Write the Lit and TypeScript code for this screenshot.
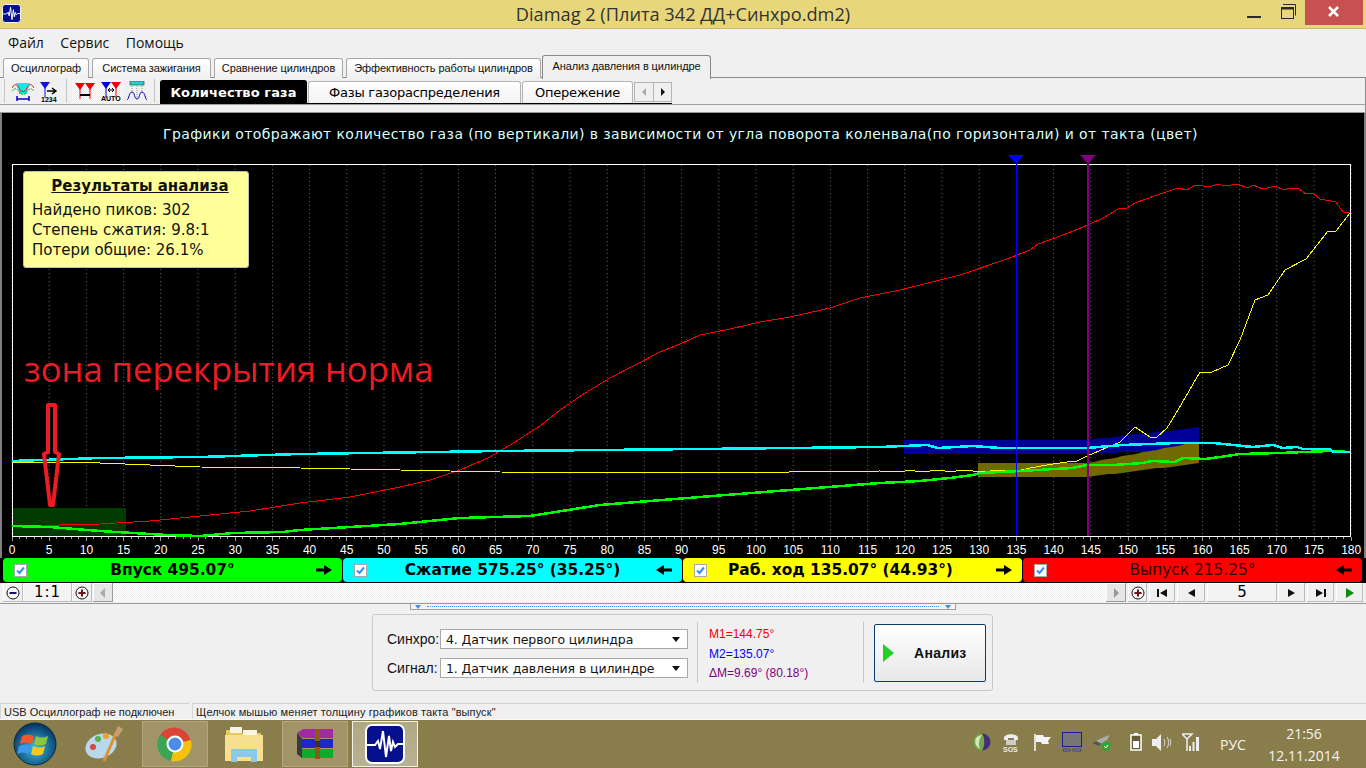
import { LitElement, css, html, svg } from "lit";
import { customElement } from "lit/decorators.js";

// curves are in page pixels, read off the reference
const RED = "12,525 60,525 100,524 150,521 200,516 250,511 300,503 350,497 400,487 430,480 460,470 490,457 515,442 540,426 560,410 585,393 610,378 635,365 660,352 680,344 700,335 730,329 760,322 790,317 830,308 860,298 900,290 960,275 1007,259 1017,255 1030,250 1038,244 1063,235 1088,225 1105,217 1118,209 1127,208 1135,203 1157,195 1178,188 1187,190 1195,185 1210,187 1217,184 1225,186 1238,184 1247,188 1253,185 1263,189 1275,186 1284,190 1290,188 1298,188 1306,194 1313,193 1320,199 1336,202 1343,212 1350,212";
const YELLOW = "12,462 100,463 200,467 300,468 400,470 500,472 700,473 880,471 900,472 910,470 920,472 940,470 950,472 963,470 983,472 997,470 1017,471 1030,468 1053,464 1067,462 1077,461 1087,456 1120,442 1135,427 1150,437 1157,437 1167,428 1178,410 1200,372 1212,372 1228,365 1240,340 1255,300 1268,295 1285,270 1306,259 1328,231 1336,231 1350,213";
const CYAN = "12,461 100,458 200,457 300,454 500,451 700,449 880,447 927,445 938,448 973,446 1000,448 1087,448 1122,445 1177,443 1213,443 1253,447 1273,445 1283,448 1297,447 1303,449 1330,449 1333,452 1350,452";
const GREEN = "12,526 50,527 100,531 133,533 167,535 200,536 233,533 283,532 300,530 400,524 460,518 530,516 600,505 700,497 790,490 880,483 920,481 950,478 973,475 980,473 1020,471 1072,468 1087,465 1113,465 1143,463 1152,461 1175,462 1183,458 1205,459 1220,457 1240,454 1280,453 1330,451 1350,452";

const degX = (d: number) => 12 + d * 7.44;
const degrees = Array.from({ length: 181 }, (_, i) => i);
const majors = degrees.filter((d) => d % 5 === 0);

// stair-stepped band that stays flat up to x=1087 and then climbs to x=1202
function band(x0: number, top: number, bottom: number, topRise: number, bottomRise: number) {
  const up: string[] = [`${x0},${top}`];
  const down: string[] = [`${x0},${bottom}`];
  for (let x = 1087; x <= 1202; x += 7) {
    const t = (x - 1087) / 115;
    up.push(`${x},${Math.round(top - t * topRise)}`);
    down.push(`${x},${Math.round(bottom - t * bottomRise)}`);
  }
  return [...up, ...down.reverse()].join(" ");
}

const appIcon = (size: number) => html`<svg width=${size} height=${size} viewBox="0 0 40 40">
  <rect x="1" y="1" width="38" height="38" rx="6" fill="#04108c" stroke="#fff" stroke-width="2" />
  <polyline points="2,21 10,21 13,17 15,25 18,7 21,33 24,12 26,27 28,18 30,23 33,20 38,20" fill="none" stroke="#fff" stroke-width="2" />
</svg>`;

const arrow = (left: boolean) => html`<svg class="band-arrow" width="16" height="10" viewBox="0 0 16 10">
  <path d=${left ? "M16 3.5H8V0L0 5l8 5V6.5h8z" : "M0 3.5h8V0l8 5-8 5V6.5H0z"} fill="#000" />
</svg>`;

const check = html`<svg class="check" width="13" height="13" viewBox="0 0 13 13">
  <rect x=".5" y=".5" width="12" height="12" fill="#fff" stroke="#a9a9a9" />
  <path d="M3 6.5 5.5 9 10 3.5" fill="none" stroke="#3b8df0" stroke-width="2" />
</svg>`;

const tri = (x: number, color: string) => svg`<path d="M${x} 2h10l-5 7z" fill=${color} /><path d="M${x + 5} 8v10" stroke=${color} />`;

const toolIcons = {
  scope: html`<svg width="22" height="22" viewBox="0 0 22 22">
    <path d="M4 3h14l-3 8v3H7v-3z" fill="#19e6e6" />
    <path d="M0 8c3-6 6-3 8 2 1 2 5 2 6 0 2-5 5-8 8-2" fill="none" stroke="#e01818" />
    <path d="M0 11c3-4 6-2 8 2 2 2 4 2 6 0 2-4 5-6 8-2" fill="none" stroke="#18a018" stroke-dasharray="2 1" />
    <path d="M5 16v5M17 16v5M5 19h12" stroke="#0000c8" stroke-width="1.5" />
  </svg>`,
  count: html`<svg width="18" height="22" viewBox="0 0 18 22">
    ${tri(0, "#1010e0")}
    <path d="M7 11h8M12 8l4 3-4 3" fill="none" stroke="#000" stroke-width="1.4" />
    <text x="1" y="22" font-size="7" font-family="Liberation Sans" font-weight="700">1234</text>
  </svg>`,
  hMark: html`<svg width="20" height="20" viewBox="0 0 20 20">
    ${tri(0, "#f00000")}${tri(10, "#f00000")}
    <path d="M5 14h10" stroke="#000" stroke-width="2" />
  </svg>`,
  auto: html`<svg width="20" height="22" viewBox="0 0 20 22">
    ${tri(0, "#0000e0")}${tri(10, "#f00000")}
    <path d="M7 10h6M7 10l2-2M7 10l2 2M13 10l-2-2M13 10l-2 2" stroke="#000" fill="none" />
    <text x="0" y="21" font-size="7" font-family="Liberation Sans" font-weight="700">AUTO</text>
  </svg>`,
  peaks: html`<svg width="20" height="20" viewBox="0 0 20 20">
    <rect x="3" y="0" width="14" height="4" fill="#19d6d6" stroke="#333" stroke-width=".6" />
    <path d="M0 19c2-1 2-8 5-8s2 7 5 7 2-7 5-7 3 7 5 8" fill="none" stroke="#0000c0" />
    <path d="M5 5v6M10 5v12M15 5v6" stroke="#999" stroke-dasharray="1 1" />
  </svg>`,
};

const tray = [
  html`<svg width="18" height="18" viewBox="0 0 18 18"><circle cx="9" cy="9" r="8.5" fill="#6fa84a" /><path d="M9 .5a8.5 8.5 0 0 1 0 17c3-4 3-13 0-17z" fill="#4a2a7a" /><path d="M3 5c3-3 6-3 6-3-3 4-4 9-2 14-4-2-6-7-4-11z" fill="#d6e6b8" /></svg>`,
  html`<svg width="16" height="19" viewBox="0 0 16 19"><path d="M1 5c0-5 14-5 14 0v2h-4V5H5v2H1z" fill="#eee" /><rect x="3" y="7" width="10" height="5" fill="#ccc" /><text x="0" y="18.5" font-size="7" font-weight="700" fill="#eee" font-family="Liberation Sans">SOS</text></svg>`,
  html`<svg width="19" height="19" viewBox="0 0 19 19"><path d="M2 1v17" stroke="#fff" stroke-width="1.5" /><path d="M3 2h7l1 2h7l-3 4 1 3H9L8 9H3z" fill="#f4f4f4" /></svg>`,
  html`<svg width="20" height="20" viewBox="0 0 20 20"><rect x=".5" y=".5" width="19" height="14" fill="#777" stroke="#18208c" /><path d="M1 17h7v2H1zM11 17h8v2h-8z" fill="#888" stroke="#18208c" stroke-width=".6" /></svg>`,
  html`<svg width="20" height="18" viewBox="0 0 20 18"><path d="M0 10 12 4l6-2-3 5-9 6z" fill="#aaa" /><path d="M0 10l6 3 4-2-6-3z" fill="#555" /><circle cx="14" cy="13" r="4.5" fill="#2ea82e" /><path d="M12 13l2 2 2-3" stroke="#fff" fill="none" /></svg>`,
  html`<svg width="12" height="18" viewBox="0 0 12 18"><path d="M4 0h4v2H4z" fill="#fff" /><rect x="1" y="2" width="10" height="15" fill="#665c36" stroke="#fff" stroke-width="1.5" /><rect x="3" y="8" width="6" height="7" fill="#fff" /></svg>`,
  html`<svg width="20" height="17" viewBox="0 0 20 17"><path d="M0 5h4l5-5v17l-5-5H0z" fill="#eee" /><path d="M12 5c1 2 1 5 0 7M15 3c2 3 2 8 0 11M18 5c1 2 1 5 0 7" stroke="#ddd" fill="none" /></svg>`,
  html`<svg width="18" height="18" viewBox="0 0 18 18"><path d="M0 1h10L5 6zM5 6v12" fill="none" stroke="#eee" stroke-width="1.5" /><path d="M7 13h2v5H7zM10.5 9h2v9h-2zM14 4h3v14h-3z" fill="#eee" /></svg>`,
];

@customElement("app-root")
export class AppRoot extends LitElement {
  static styles = css`
    :host {
      display: block;
      width: 1366px;
      height: 768px;
      overflow: hidden;
      background: #f0f0f0;
      font-family: "Liberation Sans", sans-serif;
      color: #000;
    }
    .titlebar {
      height: 28px;
      background: #e8d67a;
      border-bottom: 1px solid #cdb668;
      display: flex;
      align-items: center;
      justify-content: center;
      position: relative;
      font: 18.2px "Open Sans", sans-serif;
      color: #333;
    }
    .app-icon {
      position: absolute;
      left: 2px;
      top: 4px;
      line-height: 0;
    }
    .win-btns {
      position: absolute;
      right: 3px;
      top: 0;
      display: flex;
      align-items: flex-start;
    }
    .win-btn {
      width: 34px;
      height: 25px;
      line-height: 0;
    }
    .win-restore {
      width: 24px;
    }
    .win-close {
      width: 58px;
      margin-left: 1px;
      background: #c75050;
    }
    .menu {
      height: 26px;
      display: flex;
      align-items: center;
      gap: 16.5px;
      padding: 0 8px;
      font: 14px "Open Sans", sans-serif;
      color: #111;
    }
    .tabs {
      height: 22px;
      display: grid;
      grid-template-columns: 89px 122px 132px 196px 169px;
      padding-left: 3px;
      align-items: end;
      border-bottom: 1px solid #8a8a8a;
      font: 11px "Liberation Sans", sans-serif;
      color: #111;
    }
    .tab {
      height: 20px;
      margin-right: 3px;
      padding-bottom: 2px;
      border: 1px solid #a8a8a8;
      border-bottom: 0;
      border-radius: 3px 3px 0 0;
      background: linear-gradient(#fff, #f0f0f0);
      display: flex;
      align-items: center;
      justify-content: center;
      white-space: nowrap;
      box-sizing: border-box;
      letter-spacing: -0.1px;
    }
    .tab-before-on {
      margin-right: 1px;
    }
    .tab-on {
      height: 24px;
      margin: 0 0 -1px;
      border-color: #888;
      background: #f0f0f0;
      padding-bottom: 4px;
    }
    .toolbar {
      height: 26px;
      display: flex;
      align-items: center;
      border-right: 1px solid #8a8a8a;
      border-bottom: 1px solid #a0a0a0;
    }
    .tool-group {
      display: flex;
      align-items: center;
      height: 24px;
      padding: 0 4px 0 5px;
      border-left: 1px solid #c4c4c4;
    }
    .tool-group:first-child {
      margin-left: 4px;
    }
    .tool-group + .tool-group {
      border-right: 1px solid #c4c4c4;
    }
    .tool {
      width: 26px;
      height: 24px;
      display: flex;
      align-items: center;
      justify-content: center;
    }
    .tool-on {
      background: repeating-conic-gradient(#fff 0 25%, #ebebeb 0 50%) 0 0 / 2px 2px;
    }
    .subtabs {
      display: grid;
      grid-template-columns: 148px 214px 112px 38px;
      margin-left: 5px;
      height: 24px;
      border-bottom: 1px solid #000;
      box-sizing: border-box;
      align-items: end;
      font: 13px "DejaVu Sans", sans-serif;
      letter-spacing: -0.25px;
      align-self: flex-start;
      margin-top: 2px;
    }
    .subtab {
      height: 22px;
      border: 1px solid #b4b4b4;
      border-bottom: 0;
      border-radius: 3px 3px 0 0;
      background: linear-gradient(#fff, #f2f2f2);
      display: flex;
      align-items: center;
      justify-content: center;
      box-sizing: border-box;
      margin-right: 1px;
    }
    .subtab-on {
      height: 23px;
      background: #000;
      border-color: #000;
      color: #fff;
      font-weight: 700;
      letter-spacing: 0.1px;
    }
    .tab-nav {
      height: 20px;
      display: grid;
      grid-template-columns: 1fr 1fr;
      border: 1px solid #b4b4b4;
      margin-bottom: 1px;
      box-sizing: border-box;
    }
    .tab-nav span {
      display: flex;
      align-items: center;
      justify-content: center;
    }
    .tab-nav span + span {
      border-left: 1px solid #b4b4b4;
    }
    .spacer {
      height: 7px;
      border-bottom: 1px solid #9a9a9a;
      border-right: 1px solid #8a8a8a;
    }
    .scope {
      height: 445px;
      border-left: 2px solid #808080;
      border-right: 2px solid #808080;
      background: #000;
      position: relative;
    }
    .scope-title {
      height: 39px;
      box-sizing: border-box;
      padding: 13px 5px 0 0;
      text-align: center;
      font: 14px "DejaVu Sans", sans-serif;
      letter-spacing: 0.39px;
      color: #d8ffff;
      white-space: nowrap;
    }
    .scope-plot {
      display: block;
    }
    .results {
      position: absolute;
      left: 21px;
      top: 58px;
      width: 226px;
      height: 97px;
      box-sizing: border-box;
      background: #ffff99;
      border: 1px solid #bdbdbd;
      border-radius: 3px;
      padding: 4px 0 0 8px;
      font: 15px/20px "DejaVu Sans", sans-serif;
      color: #111;
    }
    .results-head {
      font-weight: 700;
      text-decoration: underline;
      text-align: center;
      margin-bottom: 4px;
    }
    .bands {
      height: 25px;
      box-sizing: border-box;
      padding: 0 3px 1px;
      background: #000;
      display: grid;
      grid-template-columns: repeat(4, 340px);
    }
    .band {
      margin-right: 1px;
      border-radius: 4px;
      display: flex;
      align-items: center;
      justify-content: center;
      position: relative;
      font: 700 15.4px "DejaVu Sans", sans-serif;
      white-space: nowrap;
    }
    .band-work {
      padding-right: 24px;
      box-sizing: border-box;
    }
    .band-red {
      font-weight: 400;
      color: #300;
    }
    .check {
      position: absolute;
      left: 11px;
      top: 6px;
    }
    .band-arrow {
      position: absolute;
      right: 10px;
      top: 7px;
    }
    .scrollrow {
      height: 21px;
      box-sizing: border-box;
      padding: 0 3px 1px;
      border-bottom: 1px solid #9a9a9a;
      display: grid;
      grid-template-columns: 20px 49px 20px 1px 20px 993px 20px 2px 19px 2px 26px 2px 28px 2px 70px 1px 27px 2px 27px 2px 27px;
      font: 15px "DejaVu Sans", sans-serif;
    }
    .cell {
      display: flex;
      align-items: center;
      justify-content: center;
      background: #f0f0f0;
      box-shadow: inset -1px -1px 0 #bdbdbd, inset 1px 1px 0 #fff;
      line-height: 0;
    }
    .num {
      line-height: 1;
      background: #f3f3f3;
    }
    .ratio {
      letter-spacing: 1px;
    }
    .track {
      background: repeating-conic-gradient(#fff 0 25%, #efefef 0 50%) 0 0 / 2px 2px;
    }
    .arrow-off {
      background: #e6e6e6;
      box-shadow: inset -1px -1px 0 #9a9a9a, inset 1px 1px 0 #fff;
    }
    .lower {
      height: 99px;
      display: flex;
      flex-direction: column;
      align-items: center;
    }
    .splitter {
      width: 546px;
      height: 6px;
      margin-left: -1px;
      box-sizing: border-box;
      border: 1px solid #a0a0a0;
      border-top: 0;
      background: #f4f4f4;
      display: flex;
      align-items: center;
      justify-content: space-between;
      padding: 0 4px;
    }
    .splitter-dots {
      flex: 1;
      margin: 0 6px;
      border-top: 1px dotted #4a90e0;
    }
    .splitter i {
      width: 0;
      height: 0;
      border: 3px solid transparent;
      border-top: 4px solid #3b8df0;
      border-bottom: 0;
    }
    .controls {
      width: 621px;
      height: 77px;
      margin: 4px 0 0 -1px;
      box-sizing: border-box;
      border: 1px solid #c8c8c8;
      border-radius: 3px;
      display: flex;
      align-items: center;
      padding: 0 6px 0 14px;
      font: 13px "Liberation Sans", sans-serif;
    }
    .selects {
      display: grid;
      grid-template-columns: 53px 248px;
      row-gap: 9px;
      align-items: center;
      color: #111;
      font-size: 14px;
      padding-top: 2px;
    }
    .combo {
      height: 20px;
      box-sizing: border-box;
      border: 1px solid #a8a8a8;
      background: #fff;
      display: flex;
      align-items: center;
      justify-content: space-between;
      padding: 0 7px 0 5px;
      font: 12.5px "DejaVu Sans", sans-serif;
      letter-spacing: -0.1px;
      white-space: nowrap;
    }
    .combo i {
      width: 0;
      height: 0;
      border: 4px solid transparent;
      border-top: 5px solid #111;
      border-bottom: 0;
    }
    .marks {
      width: 167px;
      height: 61px;
      margin-left: 9px;
      padding: 3px 0 0 11px;
      box-sizing: border-box;
      border-left: 1px solid #c8c8c8;
      border-right: 1px solid #c8c8c8;
      display: flex;
      flex-direction: column;
      justify-content: space-between;
      font-size: 12px;
      line-height: 19px;
    }
    .m1 {
      color: #f00000;
    }
    .m2 {
      color: #0000f0;
    }
    .dm {
      color: #800080;
    }
    .run {
      width: 112px;
      height: 58px;
      margin-left: 10px;
      box-sizing: border-box;
      border: 1px solid #0a3d6e;
      border-radius: 2px;
      background: linear-gradient(#fff, #e8e8e8);
      display: flex;
      align-items: center;
      padding-left: 8px;
      gap: 20px;
      font-size: 14px;
      letter-spacing: 0.3px;
      font-weight: 700;
      color: #111;
    }
    .status {
      height: 16px;
      display: flex;
      color: #222;
      border-bottom: 1px solid #f8f8f8;
    }
    .status-cell {
      display: flex;
      align-items: center;
      padding-left: 3px;
      background: #f0f0f0;
      border-left: 1px solid #d8d8d8;
      border-top: 1px solid #d0d0d0;
      box-sizing: border-box;
      font: 11px "Liberation Sans", sans-serif;
    }
    .status-a {
      width: 189px;
      margin-right: 3px;
    }
    .status-b {
      flex: 1;
      letter-spacing: 0.1px;
    }
    .taskbar {
      height: 48px;
      background: #8a7d4c;
      display: flex;
      gap: 4px;
      padding-left: 2px;
      box-sizing: border-box;
      color: #f4f4f4;
    }
    .task {
      width: 66px;
      height: 46px;
      margin-top: 1px;
      box-sizing: border-box;
      display: flex;
      align-items: center;
      justify-content: center;
    }
    .task-open {
      background: #a09468;
      border: 1px solid #b3a980;
    }
    .task-active {
      background: linear-gradient(#b0a884, #b8b294);
      border: 1px solid #f4f2e6;
    }
    .tray {
      margin-left: auto;
      display: grid;
      grid-template-columns: 30px 30px 29px 30px 38px 22px 30px 38px 46px 100px;
      align-items: center;
      justify-items: start;
    }
    .tray-lang {
      font: 14px "Open Sans", sans-serif;
    }
    .clock {
      text-align: center;
      font: 14px/22px "Open Sans", sans-serif;
      width: 76px;
      margin-top: 2px;
    }
  `;

  private renderPlot() {
    return html`<svg class="scope-plot" width="1362" height="406" viewBox="2 152 1362 406">
      ${majors.map((d) => svg`<line x1=${degX(d)} x2=${degX(d)} y1="165" y2="536" stroke="#6a6a6a" stroke-dasharray="1 3" />`)}
      ${degrees.map((d) => svg`<line x1=${degX(d)} x2=${degX(d)} y1="537" y2=${d % 5 === 0 ? 541 : 539} stroke="#999" shape-rendering="crispEdges" />`)}
      <rect x="12.5" y="164.5" width="1338" height="372" fill="none" stroke="#fff" shape-rendering="crispEdges" />
      <rect x="13" y="508" width="113" height="28" fill="#003c00" />
      <polygon points=${band(904, 440, 454, 13, 5)} fill="#000096" />
      <polygon points=${band(978, 463, 477, 22, 14)} fill="#706a00" />
      <g fill="none" shape-rendering="crispEdges">
        <polyline points=${RED} stroke="#ff0000" />
        <polyline points=${YELLOW} stroke="#ffff00" />
        <polyline points=${GREEN} stroke="#00ff00" stroke-width="2.5" />
        <polyline points=${CYAN} stroke="#00ffff" stroke-width="2.5" />
      </g>
      <line x1="1016.5" x2="1016.5" y1="164" y2="536" stroke="#0000ff" />
      <line x1="1088" x2="1088" y1="164" y2="536" stroke="#800080" stroke-width="2" />
      <polygon points="1008,155 1024,155 1016,164" fill="#0000ff" />
      <polygon points="1080,155 1096,155 1088,164" fill="#800080" />
      ${majors.map((d) => svg`<text x=${degX(d)} y="554" text-anchor="middle" fill="#fff" font-size="12" font-family="Liberation Sans">${d}</text>`)}
      <text x="24" y="382" fill="#ed1c24" font-size="34.6" font-family="Open Sans">зона перекрытия норма</text>
      <path d="M48 405h7v47l4 2-6 51h-3l-6-51 4-2z" fill="none" stroke="#ed1c24" stroke-width="4" stroke-linejoin="round" />
    </svg>`;
  }

  private glyph(d: string, fill = "#111") {
    return html`<svg width="12" height="12" viewBox="0 0 12 12"><path d=${d} fill=${fill} /></svg>`;
  }

  private zoomBtn(plus: boolean) {
    return html`<svg width="14" height="14" viewBox="0 0 14 14">
      <circle cx="7" cy="7" r="6" fill="#f8f8f8" stroke="#111" />
      <path d=${plus ? "M3.5 7h7M7 3.5v7" : "M3.5 7h7"} stroke=${plus ? "#7c0c0c" : "#10106c"} stroke-width="2" />
    </svg>`;
  }

  render() {
    return html`
      <div class="titlebar">
        <span class="app-icon">${appIcon(19)}</span>
        Diamag 2 (Плита 342 ДД+Синхро.dm2)
        <div class="win-btns">
          <div class="win-btn">
            <svg width="34" height="25"><rect x="1" y="16" width="14" height="2" fill="#2b2b2b" /></svg>
          </div>
          <div class="win-btn win-restore">
            <svg width="24" height="25" fill="none" stroke="#2b2b2b"><path d="M3 4.5h12.5v11" /><rect x="1.5" y="7.5" width="12" height="11" /><path d="M1 8.5h13" stroke-width="2" /></svg>
          </div>
          <div class="win-btn win-close">
            <svg width="58" height="25"><path d="M24 7l9 9M33 7l-9 9" stroke="#fff" stroke-width="2.5" /></svg>
          </div>
        </div>
      </div>
      <div class="menu"><span>Файл</span><span>Сервис</span><span>Помощь</span></div>
      <div class="tabs">
        <div class="tab">Осциллограф</div>
        <div class="tab">Система зажигания</div>
        <div class="tab">Сравнение цилиндров</div>
        <div class="tab tab-before-on">Эффективность работы цилиндров</div>
        <div class="tab tab-on">Анализ давления в цилиндре</div>
      </div>
      <div class="toolbar">
        <div class="tool-group">
          <span class="tool">${toolIcons.scope}</span><span class="tool">${toolIcons.count}</span>
        </div>
        <div class="tool-group">
          <span class="tool tool-on">${toolIcons.hMark}</span><span class="tool tool-on">${toolIcons.auto}</span><span class="tool">${toolIcons.peaks}</span>
        </div>
        <div class="subtabs">
          <div class="subtab subtab-on">Количество газа</div>
          <div class="subtab">Фазы газораспределения</div>
          <div class="subtab">Опережение</div>
          <div class="tab-nav">
            <span>${this.glyph("M8 2v8L4 6z", "#aaa")}</span><span>${this.glyph("M4 2v8l4-4z")}</span>
          </div>
        </div>
      </div>
      <div class="spacer"></div>
      <div class="scope">
        <div class="scope-title">Графики отображают количество газа (по вертикали) в зависимости от угла поворота коленвала(по горизонтали) и от такта (цвет)</div>
        ${this.renderPlot()}
        <div class="results">
          <div class="results-head">Результаты анализа</div>
          <div>Найдено пиков: 302</div>
          <div>Степень сжатия: 9.8:1</div>
          <div>Потери общие: 26.1%</div>
        </div>
      </div>
      <div class="bands">
        <div class="band" style="background:#00ff00">${check}Впуск 495.07°${arrow(false)}</div>
        <div class="band" style="background:#00ffff">${check}Сжатие 575.25° (35.25°)${arrow(true)}</div>
        <div class="band band-work" style="background:#ffff00">${check}Раб. ход 135.07° (44.93°)${arrow(false)}</div>
        <div class="band band-red" style="background:#ff0000">${check}Выпуск 215.25°${arrow(true)}</div>
      </div>
      <div class="scrollrow">
        <div class="cell">${this.zoomBtn(false)}</div>
        <div class="cell num ratio">1:1</div>
        <div class="cell">${this.zoomBtn(true)}</div>
        <div></div>
        <div class="cell arrow-off">${this.glyph("M8 1v10L3 6z", "#aaa")}</div>
        <div class="track"></div>
        <div class="cell arrow-off">${this.glyph("M4 1v10l5-5z", "#999")}</div>
        <div></div>
        <div class="cell">${this.zoomBtn(true)}</div>
        <div></div>
        <div class="cell">${this.glyph("M1 2h2v8H1zM11 2v8L4 6z")}</div>
        <div></div>
        <div class="cell">${this.glyph("M10 2v8L3 6z")}</div>
        <div></div>
        <div class="cell num">5</div>
        <div></div>
        <div class="cell">${this.glyph("M2 2v8l7-4z")}</div>
        <div></div>
        <div class="cell">${this.glyph("M1 2v8l7-4zM9 2h2v8H9z")}</div>
        <div></div>
        <div class="cell">${this.glyph("M2 1v10l8-5z", "#0a8a0a")}</div>
      </div>
      <div class="lower">
        <div class="splitter"><i></i><span class="splitter-dots"></span><i></i></div>
        <div class="controls">
          <div class="selects">
            <span>Синхро:</span>
            <div class="combo">4. Датчик первого цилиндра<i></i></div>
            <span>Сигнал:</span>
            <div class="combo">1. Датчик давления в цилиндре<i></i></div>
          </div>
          <div class="marks">
            <span class="m1">M1=144.75°</span>
            <span class="m2">M2=135.07°</span>
            <span class="dm">ΔM=9.69° (80.18°)</span>
          </div>
          <div class="run">
            <svg width="11" height="18" viewBox="0 0 11 18"><path d="M0 0 11 9 0 18z" fill="#22d022" /></svg>
            Анализ
          </div>
        </div>
      </div>
      <div class="status">
        <div class="status-cell status-a">USB Осциллограф не подключен</div>
        <div class="status-cell status-b">Щелчок мышью меняет толщину графиков такта "выпуск"</div>
      </div>
      <div class="taskbar">
        <div class="task">
          <svg width="44" height="44" viewBox="0 0 44 44">
            <defs>
              <radialGradient id="orb" cx=".5" cy=".6" r=".6"><stop offset="0" stop-color="#3ac0e8" /><stop offset="1" stop-color="#04305c" /></radialGradient>
            </defs>
            <circle cx="22" cy="22" r="21" fill="url(#orb)" stroke="#0a2a40" />
            <path d="M9 14c4-2 8-2 12 0l-2 8c-4-2-8-2-12 0z" fill="#f0582a" />
            <path d="M23 14c4 2 8 2 12 0l-2 8c-4 2-8 2-12 0z" fill="#8cc63e" />
            <path d="M6 24c4-2 8-2 12 0l-2 8c-4-2-8-2-12 0z" fill="#3a9ae8" />
            <path d="M20 24c4 2 8 2 12 0l-2 8c-4 2-8 2-12 0z" fill="#f8c820" />
          </svg>
        </div>
        <div class="task">
          <svg width="40" height="38" viewBox="0 0 40 38">
            <ellipse cx="16" cy="21" rx="16" ry="12" fill="#b8d8ec" transform="rotate(-20 16 21)" />
            <circle cx="8" cy="22" r="3" fill="#d04a4a" /><circle cx="13" cy="14" r="3" fill="#5ab04a" /><circle cx="21" cy="11" r="3" fill="#e8a030" />
            <path d="M19 36 31 8" stroke="#e09030" stroke-width="3" /><path d="M29 10l4-9 5 3-5 8z" fill="#c8a070" />
          </svg>
        </div>
        <div class="task task-open">
          <svg width="36" height="36" viewBox="0 0 36 36">
            <path d="M18 18 34 18A17 17 0 0 0 3 9z" fill="#dc4437" />
            <path d="M18 18 3 9A17 17 0 0 0 14 35z" fill="#3aa655" />
            <path d="M18 18 14 35A17 17 0 0 0 34 14z" fill="#f4c20d" />
            <circle cx="18" cy="18" r="8.5" fill="#fff" /><circle cx="18" cy="18" r="6.5" fill="#4a8ee8" />
          </svg>
        </div>
        <div class="task">
          <svg width="40" height="40" viewBox="0 0 40 40">
            <path d="M1 6h12l3 3h20v18H1z" fill="#e8c860" />
            <path d="M5 3h12v6H5zM18 6h14v6H18z" fill="#f8f4e0" />
            <path d="M0 11h38v26H0z" fill="#f6e090" />
            <path d="M6 38V25h26v13h-6v-5H12v5z" fill="#8cc8e8" />
          </svg>
        </div>
        <div class="task task-open">
          <svg width="36" height="30" viewBox="0 0 36 30">
            <path d="M0 4 6 0h30v9H6z" fill="#a02aa0" /><rect x="4" y="10" width="32" height="9" fill="#1c28c8" /><rect x="4" y="20" width="32" height="9" fill="#12a82c" />
            <path d="M0 4l5 5v20L0 25z" fill="#3a3a3a" /><rect x="18" y="0" width="5" height="30" fill="#8a5a1c" /><rect x="18" y="12" width="5" height="6" fill="#333" />
          </svg>
        </div>
        <div class="task task-active">${appIcon(40)}</div>
        <div class="tray">
          ${tray.map((icon) => html`<span>${icon}</span>`)}
          <span class="tray-lang">РУС</span>
          <div class="clock">21:56<br />12.11.2014</div>
        </div>
      </div>
    `;
  }
}
